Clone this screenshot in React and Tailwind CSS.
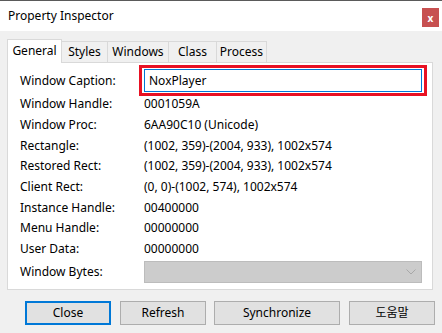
import React from "react";

const ROWS = [
  ["Window Handle:", "0001059A"],
  ["Window Proc:", "6AA90C10 (Unicode)"],
  ["Rectangle:", "(1002, 359)-(2004, 933), 1002x574"],
  ["Restored Rect:", "(1002, 359)-(2004, 933), 1002x574"],
  ["Client Rect:", "(0, 0)-(1002, 574), 1002x574"],
  ["Instance Handle:", "00400000"],
  ["Menu Handle:", "00000000"],
  ["User Data:", "00000000"],
];

const TABS = ["General", "Styles", "Windows", "Class", "Process"];
const TAB_W = { General: "w-[55px]", Styles: "w-[46px]", Windows: "w-[61px]", Class: "w-[48px]", Process: "w-[50px]" };

function Button({ children, primary, wide }) {
  return (
    <button
      className={
        "h-[24px] bg-[#e1e1e1] text-[12px] text-black " +
        (wide ? "w-[126px] " : "w-[86px] ") +
        (primary ? "border-2 border-[#0078d7]" : "border border-[#adadad]")
      }
    >
      {children}
    </button>
  );
}

export default function App() {
  return (
    <div
      className="w-[442px] h-[333px] bg-[#f0f0f0] flex flex-col text-[12px] text-black overflow-hidden"
      style={{ fontFamily: '"Noto Sans", "Noto Sans CJK KR", sans-serif' }}
    >
      {/* title bar */}
      <div className="h-[31px] bg-white border-t border-[#5a5a5a] flex items-start justify-between pl-[8px] pr-[3px]">
        <span className="mt-[7px] leading-[16px]">Property Inspector</span>
        <div className="mt-[7px] w-[17px] h-[19px] bg-[#c75050] flex items-center justify-center text-white text-[10px] font-bold leading-none">
          x
        </div>
      </div>

      {/* tabs */}
      <div className="pl-[7px] mt-[8px] flex items-end h-[23px] relative z-10">
        {TABS.map((t, i) =>
          i === 0 ? (
            <div
              key={t}
              className={"h-[24px] -mb-[1px] bg-white border border-b-0 border-[#d9d9d9] flex items-center justify-center pb-[2px] " + TAB_W[t]}
            >
              {t}
            </div>
          ) : (
            <div
              key={t}
              className={"h-[21px] border border-l-0 border-b-0 border-[#d9d9d9] flex items-center justify-center " + TAB_W[t]}
            >
              {t}
            </div>
          )
        )}
      </div>

      {/* panel */}
      <div className="ml-[7px] w-[426px] h-[228px] bg-white border border-[#d9d9d9] pl-[12px] pt-[2px]">
        <div className="flex items-center h-[31px]">
          <span className="w-[119px]">Window Caption:</span>
          <div className="w-[288px] h-[31px] border-[3px] border-[#e81123] bg-white px-[2px] py-[1px]">
            <div className="h-full border border-[#0078d7] flex items-center pl-[4px]">NoxPlayer</div>
          </div>
        </div>
        <div className="-mt-[2px]">
          {ROWS.map(([k, v]) => (
            <div key={k} className="flex items-center h-[20.7px]">
              <span className="w-[124px] shrink-0">{k}</span>
              <span>{v}</span>
            </div>
          ))}
        </div>
        <div className="flex items-center h-[22px] mt-[1px]">
          <span className="w-[124px] shrink-0 text-[#000]">Window Bytes:</span>
          <div className="w-[278px] h-[22px] bg-[#cccccc] border border-[#bcbcbc] flex items-center justify-end pr-[5px]">
            <svg width="10" height="6" viewBox="0 0 10 6">
              <path d="M0.5 0.5 L5 5 L9.5 0.5" fill="none" stroke="#a8a8a8" strokeWidth="1" />
            </svg>
          </div>
        </div>
      </div>

      {/* buttons */}
      <div className="mt-[11px] pl-[25px] flex">
        <Button primary>Close</Button>
        <div className="w-[9px]" />
        <Button>Refresh</Button>
        <div className="w-[8px]" />
        <Button wide>Synchronize</Button>
        <div className="w-[9px]" />
        <Button>도움말</Button>
      </div>
    </div>
  );
}
